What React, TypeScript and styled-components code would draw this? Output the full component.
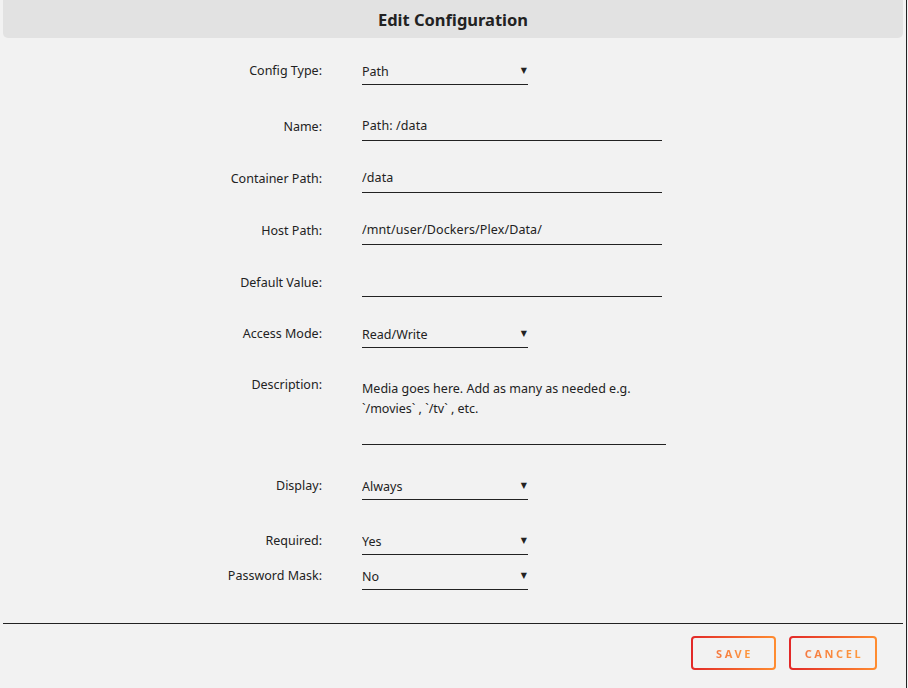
import styled, { createGlobalStyle } from "styled-components";

const GlobalStyle = createGlobalStyle`
  html, body {
    margin: 0;
    padding: 0;
    background: #f2f2f2;
  }
  body {
    font-family: "Noto Sans", "Open Sans", sans-serif;
    color: #222;
  }
`;

const Frame = styled.div`
  width: 907px;
  height: 688px;
  padding: 0 3px;
  box-sizing: border-box;
  border-right: 1px solid #222;
  background: #f2f2f2;
  display: flex;
  flex-direction: column;
`;

const Header = styled.div`
  height: 38px;
  background: #e2e2e2;
  border-radius: 0 0 5px 5px;
  display: flex;
  align-items: center;
  justify-content: center;
  font-size: 16.5px;
  font-weight: 700;
  color: #222;
`;

const Form = styled.div`
  display: flex;
  flex-direction: column;
  padding-top: 20px;
`;

const Row = styled.div<{ $top?: number }>`
  display: grid;
  grid-template-columns: 319px 1fr;
  column-gap: 40px;
  align-items: start;
  margin-top: ${(p) => p.$top ?? 0}px;
`;

const Label = styled.label<{ $pad: number }>`
  text-align: right;
  font-size: 12.5px;
  line-height: 18px;
  padding-top: ${(p) => p.$pad}px;
  color: #222;
`;

const TextInput = styled.input<{ $w?: number }>`
  width: ${(p) => p.$w ?? 300}px;
  height: 31px;
  box-sizing: border-box;
  border: none;
  border-bottom: 1px solid #222;
  background: transparent;
  padding: 1px 0 0;
  font: inherit;
  font-size: 12.5px;
  letter-spacing: 0.1px;
  color: #222;
  outline: none;
`;

const SelectWrap = styled.div`
  position: relative;
  width: 166px;
  &::after {
    content: "▼";
    position: absolute;
    right: 1px;
    top: 8px;
    font-family: "DejaVu Sans", sans-serif;
    font-size: 8px;
    color: #222;
    pointer-events: none;
  }
`;

const Select = styled.select`
  appearance: none;
  width: 166px;
  height: 27px;
  box-sizing: border-box;
  border: none;
  border-bottom: 1px solid #222;
  border-radius: 0;
  background: transparent;
  padding: 0;
  font: inherit;
  font-size: 12.5px;
  color: #222;
  outline: none;
`;

const TextArea = styled.textarea`
  width: 304px;
  height: 70px;
  box-sizing: border-box;
  border: none;
  border-bottom: 1px solid #222;
  background: transparent;
  padding: 4px 0 0;
  font: inherit;
  font-size: 12.5px;
  line-height: 20px;
  color: #222;
  resize: none;
  outline: none;
`;

const Rule = styled.hr`
  margin: 33px 0 0;
  border: none;
  border-top: 1px solid #222;
`;

const Actions = styled.div`
  display: flex;
  justify-content: flex-end;
  gap: 13px;
  padding: 12px 26px 0 0;
`;

const GradButton = styled.button<{ $w: number }>`
  width: ${(p) => p.$w}px;
  height: 34px;
  box-sizing: border-box;
  border: 2px solid transparent;
  border-radius: 4px;
  background:
    linear-gradient(#f2f2f2, #f2f2f2) padding-box,
    linear-gradient(90deg, #e22828, #ff8d30) border-box;
  font-family: "Noto Sans", sans-serif;
  font-size: 11px;
  font-weight: 700;
  letter-spacing: 2.6px;
  cursor: pointer;
  padding: 0 0 0 2px;
  span {
    background: linear-gradient(90deg, #f57940, #ff9a3c);
    -webkit-background-clip: text;
    background-clip: text;
    color: transparent;
  }
`;

type Field = {
  kind: "select" | "text" | "area";
  label: string;
  value: string;
  top: number;
};

const fields: Field[] = [
  { kind: "select", label: "Config Type:", value: "Path", top: 0 },
  { kind: "text", label: "Name:", value: "Path: /data", top: 25 },
  { kind: "text", label: "Container Path:", value: "/data", top: 21 },
  { kind: "text", label: "Host Path:", value: "/mnt/user/Dockers/Plex/Data/", top: 21 },
  { kind: "text", label: "Default Value:", value: "", top: 21 },
  { kind: "select", label: "Access Mode:", value: "Read/Write", top: 24 },
  {
    kind: "area",
    label: "Description:",
    value: "Media goes here. Add as many as needed e.g. `/movies` , `/tv` , etc.",
    top: 27,
  },
  { kind: "select", label: "Display:", value: "Always", top: 28 },
  { kind: "select", label: "Required:", value: "Yes", top: 28 },
  { kind: "select", label: "Password Mask:", value: "No", top: 8 },
];

const labelPad = { select: 4, text: 8, area: 1 };

const Control = ({ f }: { f: Field }) => {
  if (f.kind === "select")
    return (
      <SelectWrap>
        <Select defaultValue={f.value}>
          <option>{f.value}</option>
        </Select>
      </SelectWrap>
    );
  if (f.kind === "area") return <TextArea defaultValue={f.value} />;
  return <TextInput defaultValue={f.value} />;
};

export default function App() {
  return (
    <>
      <GlobalStyle />
      <Frame>
        <Header>Edit Configuration</Header>
        <Form>
          {fields.map((f) => (
            <Row key={f.label} $top={f.top}>
              <Label $pad={labelPad[f.kind]}>{f.label}</Label>
              <Control f={f} />
            </Row>
          ))}
        </Form>
        <Rule />
        <Actions>
          <GradButton $w={85}>
            <span>SAVE</span>
          </GradButton>
          <GradButton $w={88}>
            <span>CANCEL</span>
          </GradButton>
        </Actions>
      </Frame>
    </>
  );
}
